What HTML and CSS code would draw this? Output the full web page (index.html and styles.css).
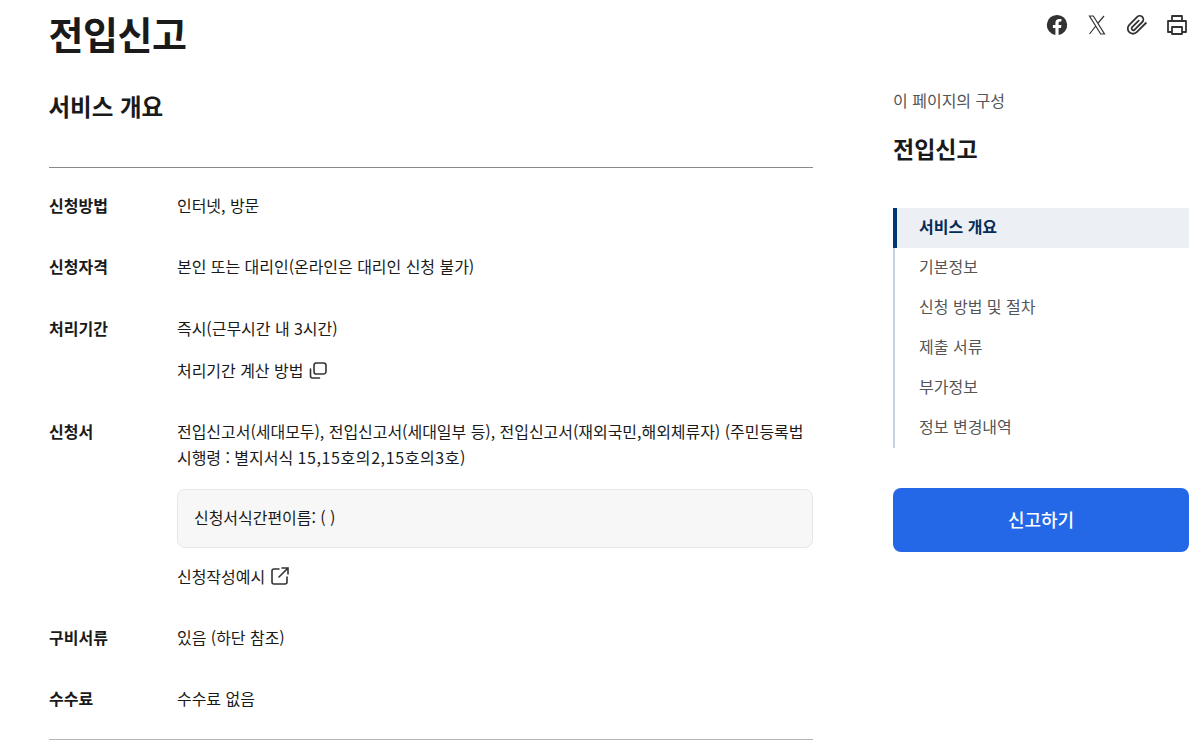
FILE: index.html
```html
<!DOCTYPE html>
<html lang="ko">
<head>
  <meta charset="UTF-8">
  <title>전입신고</title>
  <link rel="stylesheet" href="styles.css">
</head>
<body>
  <div class="top-icons">
    <svg class="icon-fb" viewBox="0 0 24 24"><path d="M12 2a10 10 0 0 0-1.600 19.900v-7H7.900V12h2.500V9.800c0-2.500 1.500-3.900 3.800-3.900 1.100 0 2.200.2 2.200.2v2.500h-1.200c-1.200 0-1.600.8-1.600 1.600V12h2.800l-.4 2.900h-2.400v7A10 10 0 0 0 12 2z"/></svg>
    <svg class="icon-line" viewBox="0 0 24 24"><path d="M4.500 3h3.800l11.200 18h-3.800zM19 3l-6.300 7.500M10.800 13 4.500 21"/></svg>
    <svg class="icon-line" viewBox="0 0 24 24"><path class="thick" d="M21.400 9.500l-9.700 9.700a5.200 5.200 0 0 1-7.400 0 5.200 5.200 0 0 1 0-7.400l7.900-7.900a3.600 3.600 0 0 1 5.100 5.100l-7.900 7.900a1.800 1.800 0 0 1-2.500-2.500l7.300-7.300"/></svg>
    <svg class="icon-line" viewBox="0 0 24 24"><path class="thick" d="M7 8V3h10v5M7 19H3V8h18v11h-4M7 14h10v7H7z"/></svg>
  </div>

  <div class="page">
    <main class="main">
      <h1>전입신고</h1>
      <h2>서비스 개요</h2>
      <div class="table">
        <div class="row">
          <div class="label">신청방법</div>
          <div class="value"><p>인터넷, 방문</p></div>
        </div>
        <div class="row row-wide">
          <div class="label">신청자격</div>
          <div class="value"><p>본인 또는 대리인(온라인은 대리인 신청 불가)</p></div>
        </div>
        <div class="row">
          <div class="label">처리기간</div>
          <div class="value">
            <p>즉시(근무시간 내 3시간)</p>
            <p class="link">처리기간 계산 방법
              <svg viewBox="0 0 18 18"><path d="M6.500 2h8A2.500 2.500 0 0 1 17 4.500v6a2.500 2.500 0 0 1-2.500 2.500h-8A2.500 2.500 0 0 1 5 10.500v-6A2.500 2.500 0 0 1 6.500 2zM1.500 8v7a2 2 0 0 0 2 2h7"/></svg>
            </p>
          </div>
        </div>
        <div class="row">
          <div class="label">신청서</div>
          <div class="value">
            <p>전입신고서(세대모두), 전입신고서(세대일부 등), 전입신고서(재외국민,해외체류자) (주민등록법 시행령 : 별지서식 <span class="num">15,15호의2,15호의3호</span>)</p>
            <div class="note">신청서식간편이름: ( )</div>
            <p class="link">신청작성예시
              <svg viewBox="0 0 18 18"><path d="M8 2H3a2 2 0 0 0-2 2v11a2 2 0 0 0 2 2h11a2 2 0 0 0 2-2v-5M11 1h6v6M17 1 8 10"/></svg>
            </p>
          </div>
        </div>
        <div class="row">
          <div class="label">구비서류</div>
          <div class="value"><p>있음 (하단 참조)</p></div>
        </div>
        <div class="row">
          <div class="label">수수료</div>
          <div class="value"><p>수수료 없음</p></div>
        </div>
      </div>
    </main>

    <aside class="side">
      <div class="side-caption">이 페이지의 구성</div>
      <div class="side-title">전입신고</div>
      <ul class="toc">
        <li class="active">서비스 개요</li>
        <li>기본정보</li>
        <li>신청 방법 및 절차</li>
        <li>제출 서류</li>
        <li>부가정보</li>
        <li>정보 변경내역</li>
      </ul>
      <button class="apply">신고하기</button>
    </aside>
  </div>
</body>
</html>
```

FILE: styles.css
```css
* {
  box-sizing: border-box;
}
html, body {
  height: 740px;
  overflow: hidden;
}
body {
  margin: 0;
  position: relative;
  background-color: #fff;
  color: #1a1a1a;
  font-family: "Noto Sans CJK KR", "Noto Sans", sans-serif;
  font-size: 16px;
  line-height: 26px;
}
p {
  margin: 0;
}
.page {
  display: flex;
  padding-left: 49px;
  gap: 80px;
}
.main {
  width: 764px;
}
h1 {
  margin: 0 0 0 -0.5px;
  padding-top: 8px;
  font-size: 38px;
  line-height: 50px;
  font-weight: 700;
  letter-spacing: -0.5px;
}
h2 {
  margin: 0 0 0 -0.5px;
  padding-top: 32px;
  height: 110px;
  font-size: 23.500px;
  line-height: 32px;
  font-weight: 700;
  border-bottom: 1px solid #8a8a8a;
}
.table {
  padding: 24px 0 28px;
  border-bottom: 1px solid #b5b5b5;
}
.row {
  display: flex;
  margin-bottom: 35px;
}
.row-wide {
  margin-bottom: 36px;
}
.row:last-child {
  margin-bottom: 0;
}
.label {
  width: 128px;
  font-weight: 700;
}
.value {
  flex: 1;
  letter-spacing: -0.04px;
}
.num {
  letter-spacing: 0.6px;
}
.link {
  margin-top: 16px;
  display: flex;
  align-items: center;
  gap: 6px;
}
.link svg {
  width: 18px;
  height: 18px;
  fill: none;
  stroke: #333;
  stroke-width: 1.600;
  stroke-linecap: round;
}
.note {
  margin: 19px 0 15px;
  height: 59px;
  padding: 0 16px 3px;
  display: flex;
  align-items: center;
  background-color: #f7f7f7;
  border: 1px solid #e6e6e6;
  border-radius: 8px;
}
.note + .link {
  margin-top: 0;
}
.side {
  width: 296px;
  padding-top: 87px;
}
.side-caption {
  color: #555;
}
.side-title {
  margin-top: 19px;
  font-size: 23px;
  line-height: 32px;
  font-weight: 700;
}
.toc {
  list-style: none;
  margin: 44px 0 40px;
  padding: 0;
  border-left: 2px solid #c6d3e3;
}
.toc li {
  height: 40px;
  line-height: 37px;
  padding-left: 24px;
  color: #555;
}
.toc .active {
  margin-left: -2px;
  padding-left: 22px;
  border-left: 4px solid #003675;
  background-color: #eceff4;
  color: #052b57;
  font-weight: 700;
}
.apply {
  display: block;
  width: 100%;
  height: 64px;
  padding-bottom: 4px;
  border: none;
  border-radius: 8px;
  background-color: #2468e8;
  color: #fff;
  font-family: inherit;
  font-size: 18px;
  font-weight: 500;
}
.top-icons {
  position: absolute;
  top: 13px;
  left: 1045px;
  display: flex;
  gap: 16px;
}
.top-icons svg {
  width: 24px;
  height: 24px;
  display: block;
  fill: #333;
}
.top-icons .icon-line {
  fill: none;
}
.icon-line path {
  stroke: #333;
  stroke-width: 1.200;
}
.icon-line .thick {
  stroke-width: 1.800;
  stroke-linejoin: round;
}
```
